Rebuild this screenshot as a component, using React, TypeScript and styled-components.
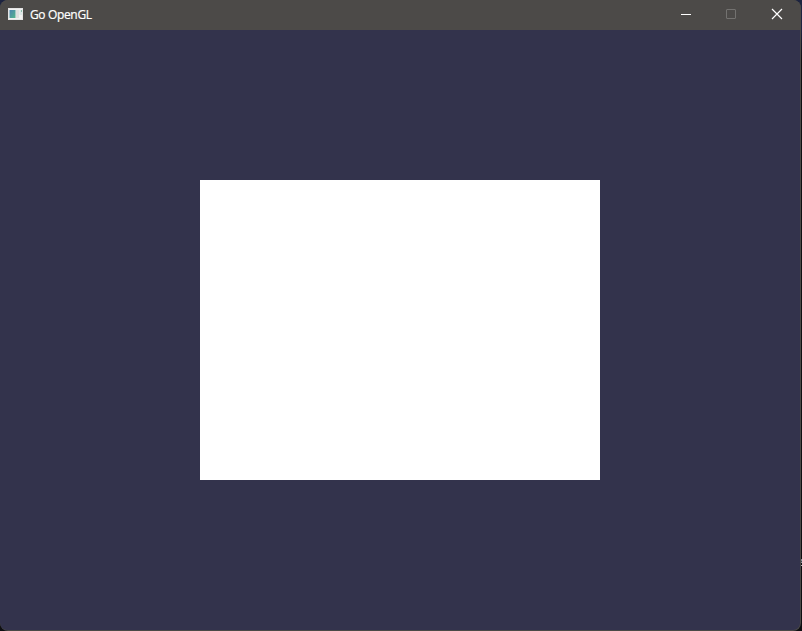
import React from "react";
import styled, { createGlobalStyle } from "styled-components";

const GlobalStyle = createGlobalStyle`
  html, body { margin: 0; padding: 0; overflow: hidden; }
  body { background: #0e0f12; }
`;

const Desktop = styled.div`
  width: 802px;
  height: 631px;
  display: flex;
  position: relative;
  background: linear-gradient(#1d2440 0, #1d2440 30px, #0e0f12 60px);
`;

const Window = styled.main`
  box-sizing: border-box;
  width: 801px;
  height: 631px;
  display: flex;
  flex-direction: column;
  border-radius: 8px;
  overflow: hidden;
  background: #4a4947;
`;

const TitleBar = styled.header`
  height: 30px;
  flex: none;
  display: flex;
  align-items: center;
  padding-left: 8px;
  background: #4c4a48;
`;

const AppIcon = styled.svg`
  width: 16px;
  height: 14px;
  flex: none;
  margin-bottom: 2px;
`;

const Title = styled.h1`
  flex: 1;
  margin: 0 0 0 6px;
  font: 400 12px/30px "Open Sans", "Noto Sans", sans-serif;
  letter-spacing: -0.35px;
  color: #ffffff;
  -webkit-text-stroke: 0.2px #ffffff;
`;

const CaptionButton = styled.button<{ $disabled?: boolean }>`
  width: 46px;
  height: 30px;
  padding: 0;
  border: 0;
  background: transparent;
  display: flex;
  color: ${(p) => (p.$disabled ? "#737270" : "#ffffff")};
`;

const Controls = styled.div`
  display: flex;
  width: 138px;
`;

const Glyph = styled.svg`
  width: 46px;
  height: 30px;
  fill: none;
  stroke: currentColor;
  stroke-width: 1;
`;

const CloseMark = styled.path`
  stroke-width: 1.2;
`;

const Canvas = styled.section`
  width: 800px;
  height: 600px;
  flex: none;
  display: flex;
  align-items: center;
  justify-content: center;
  background: #33334c;
  border-radius: 0 0 7px 7px;
`;

const Quad = styled.div`
  width: 400px;
  height: 300px;
  background: #ffffff;
`;

const Sliver = styled.i`
  position: absolute;
  left: 801px;
  top: 559px;
  width: 1px;
  height: 7px;
  background: linear-gradient(#7d8790 0 2px, #40464c 2px 3px, #8d969e 3px 4px, #0e0f12 4px 6px, #b5b9bc 6px 7px);
`;

export default function App() {
  return (
    <Desktop>
      <GlobalStyle />
      <Window>
        <TitleBar>
          <AppIcon viewBox="0 0 16 14">
            <defs>
              <linearGradient id="pane" x1="0" y1="0" x2="1" y2="1">
                <stop offset="0" stopColor="#4d83b0" />
                <stop offset="1" stopColor="#55b58c" />
              </linearGradient>
            </defs>
            <rect x="0" y="1" width="15" height="12" fill="#e4e4e4" />
            <rect x="1" y="2" width="13" height="10" fill="#f1f1f1" />
            <rect x="1.5" y="3" width="6" height="8" fill="url(#pane)" />
            <rect x="8" y="3" width="3" height="8" fill="#e0dfe0" />
            <rect x="11.5" y="3" width="2.5" height="5" fill="#dbe7e6" />
            <rect x="13" y="3" width="1" height="2" fill="#86bba8" />
          </AppIcon>
          <Title>Go OpenGL</Title>
          <Controls>
            <CaptionButton aria-label="Minimize">
              <Glyph viewBox="0 0 46 30"><path d="M18 14.5h10" /></Glyph>
            </CaptionButton>
            <CaptionButton aria-label="Maximize" $disabled>
              <Glyph viewBox="0 0 46 30"><rect x="17.5" y="9.5" width="9" height="9" rx="0.5" /></Glyph>
            </CaptionButton>
            <CaptionButton aria-label="Close">
              <Glyph viewBox="0 0 46 30"><CloseMark d="M17 9l10 10M27 9l-10 10" /></Glyph>
            </CaptionButton>
          </Controls>
        </TitleBar>
        <Canvas>
          <Quad />
        </Canvas>
      </Window>
      <Sliver />
    </Desktop>
  );
}
